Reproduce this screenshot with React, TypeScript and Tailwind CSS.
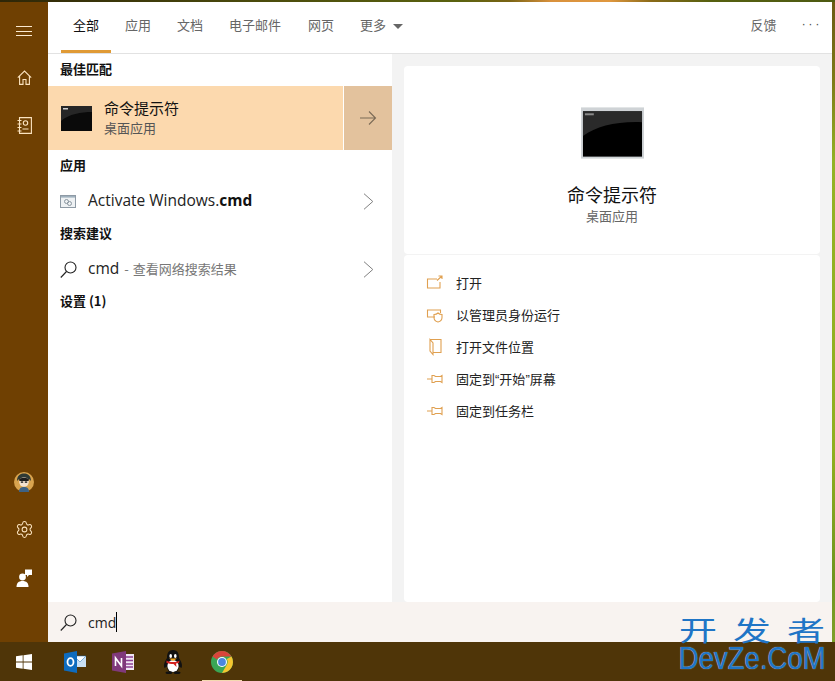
import { Settings } from "lucide-react";

const tabs = ["应用", "文档", "电子邮件", "网页"];
const cjk = "font-['Noto_Sans_CJK_SC','Noto_Sans',sans-serif]";
const latin = "font-['Open_Sans','Noto_Sans_CJK_SC',sans-serif]";

function CmdIcon({ big }: { big?: boolean }) {
  if (big) {
    return (
      <svg width="63" height="52" viewBox="0 0 64 52" className="block">
        <rect x="0" y="0" width="64" height="52" fill="#cfd3d6" />
        <rect x="2" y="4" width="60" height="46" fill="#000" />
        <path d="M2 4H62V15C36 14 16 19 2 29Z" fill="#2a2a2a" />
        <rect x="4" y="6" width="9" height="2" fill="#8a8a8a" />
      </svg>
    );
  }
  return (
    <svg width="31" height="25" viewBox="0 0 31 25" className="block">
      <rect x="0" y="0" width="31" height="25" fill="#0a0a0a" />
      <path d="M0 0H31V6C20 6 8 8 0 15Z" fill="#262626" />
      <rect x="2" y="2" width="5" height="1.5" fill="#cfcfcf" />
    </svg>
  );
}

function SearchIcon() {
  return (
    <svg width="17" height="17" viewBox="0 0 17 17" fill="none" stroke="#222" strokeWidth="1.1">
      <circle cx="10.5" cy="6.5" r="5.5" />
      <path d="M6.5 10.5 .8 16.5" />
    </svg>
  );
}

function Chevron() {
  return (
    <svg width="11" height="17" viewBox="0 0 11 17" fill="none" stroke="#808080" strokeWidth="1" className="ml-auto">
      <path d="M1 .7 9.8 8.5 1 16.3" />
    </svg>
  );
}

function HomeIcon() {
  return (
    <svg width="15" height="15" viewBox="0 0 15 15" fill="none" stroke="#fbe3c0" strokeWidth="1.1">
      <path d="M.8 7.6 7.5 1 14.2 7.6" />
      <path d="M2.6 6V14.4H6V9.5H9V14.4H12.4V6" />
    </svg>
  );
}

function BookIcon() {
  return (
    <svg width="15" height="17" viewBox="0 0 15 17" fill="none" stroke="#fbe3c0" strokeWidth="1.1">
      <path d="M2.5 .6H14.4V16.4H2.5Z" />
      <circle cx="8.5" cy="6" r="2.2" />
      <path d="M5.5 12H11.5M.5 3.5H4.5M.5 7H4.5M.5 10.5H4.5M.5 14H4.5" />
    </svg>
  );
}

function ChatIcon() {
  return (
    <svg width="16" height="18" viewBox="0 0 16 18" fill="#fff">
      <path d="M9 .5H16V6H13L11 8V6H9Z" />
      <circle cx="6.5" cy="8" r="3.4" />
      <path d="M.5 18C.5 14 2.5 12 6.5 12S12.5 14 12.5 18Z" />
    </svg>
  );
}

function Avatar() {
  return (
    <svg width="20" height="20" viewBox="0 0 20 20">
      <circle cx="10" cy="10" r="10" fill="#d9a44f" />
      <path d="M3 9C3 3 7 1.5 10 1.5S17 3 17 9L15 7H5Z" fill="#2f3a35" />
      <circle cx="10" cy="10" r="4.8" fill="#f4e2cf" />
      <path d="M5 7.5C7 5 13 5 15 7.5L14.5 9H5.5Z" fill="#1d1d1d" />
      <rect x="6.8" y="9.4" width="2.4" height="1.4" fill="#222" />
      <rect x="10.8" y="9.4" width="2.4" height="1.4" fill="#222" />
      <path d="M5 20C5 16 7 15 10 15S15 16 15 20Z" fill="#3d6285" />
    </svg>
  );
}

function ActivateIcon() {
  return (
    <svg width="16" height="13" viewBox="0 0 16 13" fill="none">
      <rect x=".5" y=".5" width="15" height="12" fill="#eef1f3" stroke="#8e9aa5" />
      <rect x="1" y="1" width="14" height="1.6" fill="#9fb0bd" />
      <circle cx="6.5" cy="6.5" r="2" stroke="#8a96a0" />
      <circle cx="9.5" cy="8.5" r="2" stroke="#8a96a0" />
    </svg>
  );
}

function ActionIcon({ kind }: { kind: number }) {
  return (
    <svg width="18" height="18" viewBox="0 0 18 18" fill="none" stroke="#e0a050" strokeWidth="1.1">
      {kind === 0 && <path d="M11 5H1.5V14H14V8M11 6.5 16 2M12.5 2H16V5" />}
      {kind === 1 && (
        <>
          <path d="M9 11H1.5V4H14.5V7" />
          <path d="M8 8.5C10 8.5 11 8 12 7C13 8 14.5 8.5 16 8.5V11.5C16 14 14 15.5 12 16C10 15.5 8 14 8 11.5Z" />
        </>
      )}
      {kind === 2 && <path d="M4 1.5H15V14.5H7M4 1.5V13L7 16.5V5L4 1.5Z" />}
      {kind >= 3 && <path d="M1 9H6M6 5.5H8L9.5 6.5H14.5L16 5.5V12.5L14.5 11.5H9.5L8 12.5H6Z" />}
    </svg>
  );
}

function WinLogo() {
  return (
    <svg width="16" height="16" viewBox="0 0 16 16" fill="#fff">
      <path d="M0 2.3 6.7 1.3V7.6H0ZM7.5 1.2 16 0V7.6H7.5ZM0 8.4H6.7V14.7L0 13.7ZM7.5 8.4H16V16L7.5 14.8Z" />
    </svg>
  );
}

function Outlook() {
  return (
    <svg width="22" height="22" viewBox="0 0 22 22">
      <rect x="10" y="5" width="12" height="11" fill="#c9e0f5" />
      <path d="M10 5H22L16 11Z" fill="#fff" stroke="#1a6fb8" strokeWidth=".5" />
      <path d="M0 2.5 13 0V22L0 19.5Z" fill="#0e6cbf" />
      <ellipse cx="6.5" cy="11" rx="3" ry="3.8" fill="none" stroke="#fff" strokeWidth="1.8" />
    </svg>
  );
}

function OneNote() {
  return (
    <svg width="23" height="22" viewBox="0 0 23 22">
      <rect x="11" y="3" width="11" height="16" fill="#f0e6f3" />
      <path d="M13 6H21M13 9.5H21M13 13H21M13 16H21" stroke="#8d3f92" strokeWidth="1.4" />
      <path d="M0 2.5 14 0V22L0 19.5Z" fill="#80397b" />
      <path d="M3.5 15V7L9.5 15V7" fill="none" stroke="#fff" strokeWidth="1.6" />
    </svg>
  );
}

function QQ() {
  return (
    <svg width="20" height="24" viewBox="0 0 20 24">
      <path d="M10 0C15 0 16 4 16 8C18 11 20 15 18.5 18L16 16.5C16 19 15 21 13 22H7C5 21 4 19 4 16.5L1.5 18C0 15 2 11 4 8C4 4 5 0 10 0Z" fill="#111" />
      <ellipse cx="10" cy="16" rx="5.6" ry="6" fill="#fff" />
      <ellipse cx="7.7" cy="6" rx="1.3" ry="1.9" fill="#fff" />
      <ellipse cx="12.3" cy="6" rx="1.3" ry="1.9" fill="#fff" />
      <path d="M6 8.5H14L10 11Z" fill="#f3a81d" />
      <path d="M3.5 10.5C7 12.5 13 12.5 16.5 10.5L16 13L13 13.5 13.5 17 10.5 14C8 14 5 13.5 3.5 13Z" fill="#d3221f" />
      <ellipse cx="6" cy="22.7" rx="3.5" ry="1.3" fill="#111" />
      <ellipse cx="14" cy="22.7" rx="3.5" ry="1.3" fill="#111" />
    </svg>
  );
}

function Chrome() {
  return (
    <svg width="22" height="22" viewBox="0 0 22 22">
      <circle cx="11" cy="11" r="11" fill="#3aa655" />
      <path d="M1.5 5.5A11 11 0 0 1 20.5 5.5H11A5.5 5.5 0 0 0 6 8.5Z" fill="#d9453b" />
      <path d="M20.5 5.5A11 11 0 0 1 11 22L15.8 13.7A5.5 5.5 0 0 0 15.8 8Z" fill="#f6c530" />
      <circle cx="11" cy="11" r="5" fill="#fff" />
      <circle cx="11" cy="11" r="3.9" fill="#4a86e0" />
    </svg>
  );
}

function ActionRow({ kind, children }: { kind: number; children: React.ReactNode }) {
  return (
    <div className="flex items-center h-8">
      <div className="w-[18px] flex justify-center mr-3">
        <ActionIcon kind={kind} />
      </div>
      <span className="text-[13px] leading-[18px] text-[#222]">{children}</span>
    </div>
  );
}

function Heading({ children }: { children: React.ReactNode }) {
  return <div className="h-8 pl-3 pb-[3px] flex items-center font-bold">{children}</div>;
}

export default function App() {
  return (
    <div className={`relative w-[835px] h-[681px] overflow-hidden flex flex-col bg-[#6f4002] ${cjk}`}>
      <div className="h-[2px] bg-[linear-gradient(90deg,#2e2607_0%,#4a4a0c_30%,#5a620f_55%,#7a6414_61%,#d9913c_66%,#e0983f_73%,#8a6a18_78%,#56600f_85%,#4d5a12_100%)]" />
      <div className="flex flex-1 min-h-0">
        {/* left rail */}
        <div className="w-12 bg-[#6f4002] flex flex-col items-center">
          <div className="mt-6 w-4 flex flex-col gap-[3.5px]">
            <div className="h-px bg-[#fbe9cf]" />
            <div className="h-px bg-[#fbe9cf]" />
            <div className="h-px bg-[#fbe9cf]" />
          </div>
          <div className="mt-[34px]"><HomeIcon /></div>
          <div className="mt-[32px]"><BookIcon /></div>
          <div className="mt-auto mb-[28px]"><Avatar /></div>
          <div className="mb-[30px]"><Settings size={19} strokeWidth={1.3} color="#fbe3c0" /></div>
          <div className="mb-[55px]"><ChatIcon /></div>
        </div>

        <div className="flex-1 flex flex-col bg-white min-w-0">
          {/* tabs */}
          <div className="h-[52px] flex border-b border-[#e2e2e2] bg-white shrink-0 text-[13px] text-[#666]">
            <div className="w-[50px] ml-[13px] mr-[14px] flex flex-col items-center">
              <span className="mt-[13px] text-[#111]">全部</span>
              <div className="mt-auto h-[3px] w-[50px] bg-[#e09a35]" />
            </div>
            {tabs.map((t) => (
              <span key={t} className={t === "电子邮件" ? "mt-[13px] mr-[27px] h-5" : "mt-[13px] mr-[26px] h-5"}>{t}</span>
            ))}
            <span className="mt-[13px] flex items-start">
              更多
              <svg width="10" height="5" viewBox="0 0 10 5" className="ml-[7px] mt-[9px]" fill="#666">
                <path d="M0 0H10L5 5Z" />
              </svg>
            </span>
            <span className="mt-[13px] ml-auto">反馈</span>
            <span className="mt-[13px] ml-[25px] mr-[10px] tracking-[2.5px] leading-[18px] text-[#555] font-['Liberation_Sans',sans-serif]">···</span>
          </div>

          <div className="flex-1 flex min-h-0">
            {/* results */}
            <div className="w-[344px] bg-white flex flex-col text-[13px] text-[#111] shrink-0">
              <Heading>最佳匹配</Heading>
              <div className="h-16 flex">
                <div className="flex-1 flex items-center pl-[13px] bg-[#fcd9ae]">
                  <CmdIcon />
                  <div className="ml-3 flex flex-col">
                    <span className="text-[15px] leading-[20px] text-[#111]">命令提示符</span>
                    <span className="text-[13px] leading-[20px] text-[#555]">桌面应用</span>
                  </div>
                </div>
                <div className="w-12 ml-px bg-[#e3c29d] flex items-center justify-center">
                  <svg width="18" height="16" viewBox="0 0 18 16" fill="none" stroke="#7b6a56" strokeWidth="1.1">
                    <path d="M1 8H16.5M10 1.5 16.5 8 10 14.5" />
                  </svg>
                </div>
              </div>
              <Heading>应用</Heading>
              <div className="h-9 pl-3 pr-[18px] pt-[2px] flex items-center">
                <ActivateIcon />
                <span className={`ml-3 text-[15.5px] text-[#222] ${latin}`}>
                  Activate Windows.<b className="text-[#111]">cmd</b>
                </span>
                <Chevron />
              </div>
              <Heading>搜索建议</Heading>
              <div className="h-9 pl-3 pr-[18px] pt-[2px] flex items-center">
                <SearchIcon />
                <span className={`ml-[11px] text-[15.5px] text-[#222] ${latin}`}>cmd</span>
                <span className="ml-[5px] text-[13px] text-[#777]">
                  <span className="mr-px">-</span> 查看网络搜索结果
                </span>
                <Chevron />
              </div>
              <Heading>设置 (1)</Heading>
            </div>

            {/* preview */}
            <div className="flex-1 bg-[#f3f3f3] pt-3 pl-3 pr-3 flex flex-col gap-px min-w-0">
              <div className="h-[188px] bg-white rounded-sm flex flex-col items-center shrink-0">
                <div className="mt-[41px]"><CmdIcon big /></div>
                <span className="mt-[23px] text-[18px] leading-[24px] text-[#111]">命令提示符</span>
                <span className="text-[13px] leading-[20px] text-[#666]">桌面应用</span>
              </div>
              <div className="flex-1 bg-white rounded-sm pl-[22px] pt-3">
                <ActionRow kind={0}>打开</ActionRow>
                <ActionRow kind={1}>以管理员身份运行</ActionRow>
                <ActionRow kind={2}>打开文件位置</ActionRow>
                <ActionRow kind={3}>
                  固定到<span className="font-['Liberation_Sans',sans-serif]">“</span>开始<span className="font-['Liberation_Sans',sans-serif]">”</span>屏幕
                </ActionRow>
                <ActionRow kind={4}>固定到任务栏</ActionRow>
              </div>
            </div>
          </div>

          {/* search box */}
          <div className="h-10 shrink-0 bg-[#f8f3f0] flex items-center pl-3">
            <SearchIcon />
            <span className={`ml-[11px] text-[14px] text-[#222] ${latin}`}>cmd</span>
            <div className="w-px h-[20px] bg-black" />
          </div>
        </div>
        <div className="w-[3px] bg-[linear-gradient(180deg,#6b5a14_0%,#7d7a18_12%,#93b325_25%,#8fb020_70%,#6f951f_90%,#7f9f2a_100%)]" />
      </div>

      {/* taskbar */}
      <div className="h-[39px] bg-[#4f3508] flex items-center shrink-0">
        <div className="w-[50px] pr-[2px] flex justify-center"><WinLogo /></div>
        <div className="w-[49px] flex justify-center"><Outlook /></div>
        <div className="w-[49px] flex justify-center"><OneNote /></div>
        <div className="w-[49px] flex justify-center"><QQ /></div>
        <div className="relative w-[49px] h-full flex items-center justify-center">
          <Chrome />
          <div className="absolute bottom-0 left-[5px] w-10 h-px bg-[#f3d9b0]" />
        </div>
      </div>

      {/* watermark */}
      <div className="absolute left-[678px] top-[613px] w-[148px] flex flex-col items-center text-[#1f75c6]">
        <span className="text-[38px] leading-[33px] whitespace-nowrap tracking-[16px] -mr-[16px] scale-y-[0.72]">开发者</span>
        <span className="flex justify-center w-full text-[32px] leading-[24px] font-['Liberation_Sans',sans-serif] whitespace-nowrap scale-x-[0.86] [text-shadow:0_0_1px_#bfe6ff]">DevZe.CoM</span>
      </div>
    </div>
  );
}
